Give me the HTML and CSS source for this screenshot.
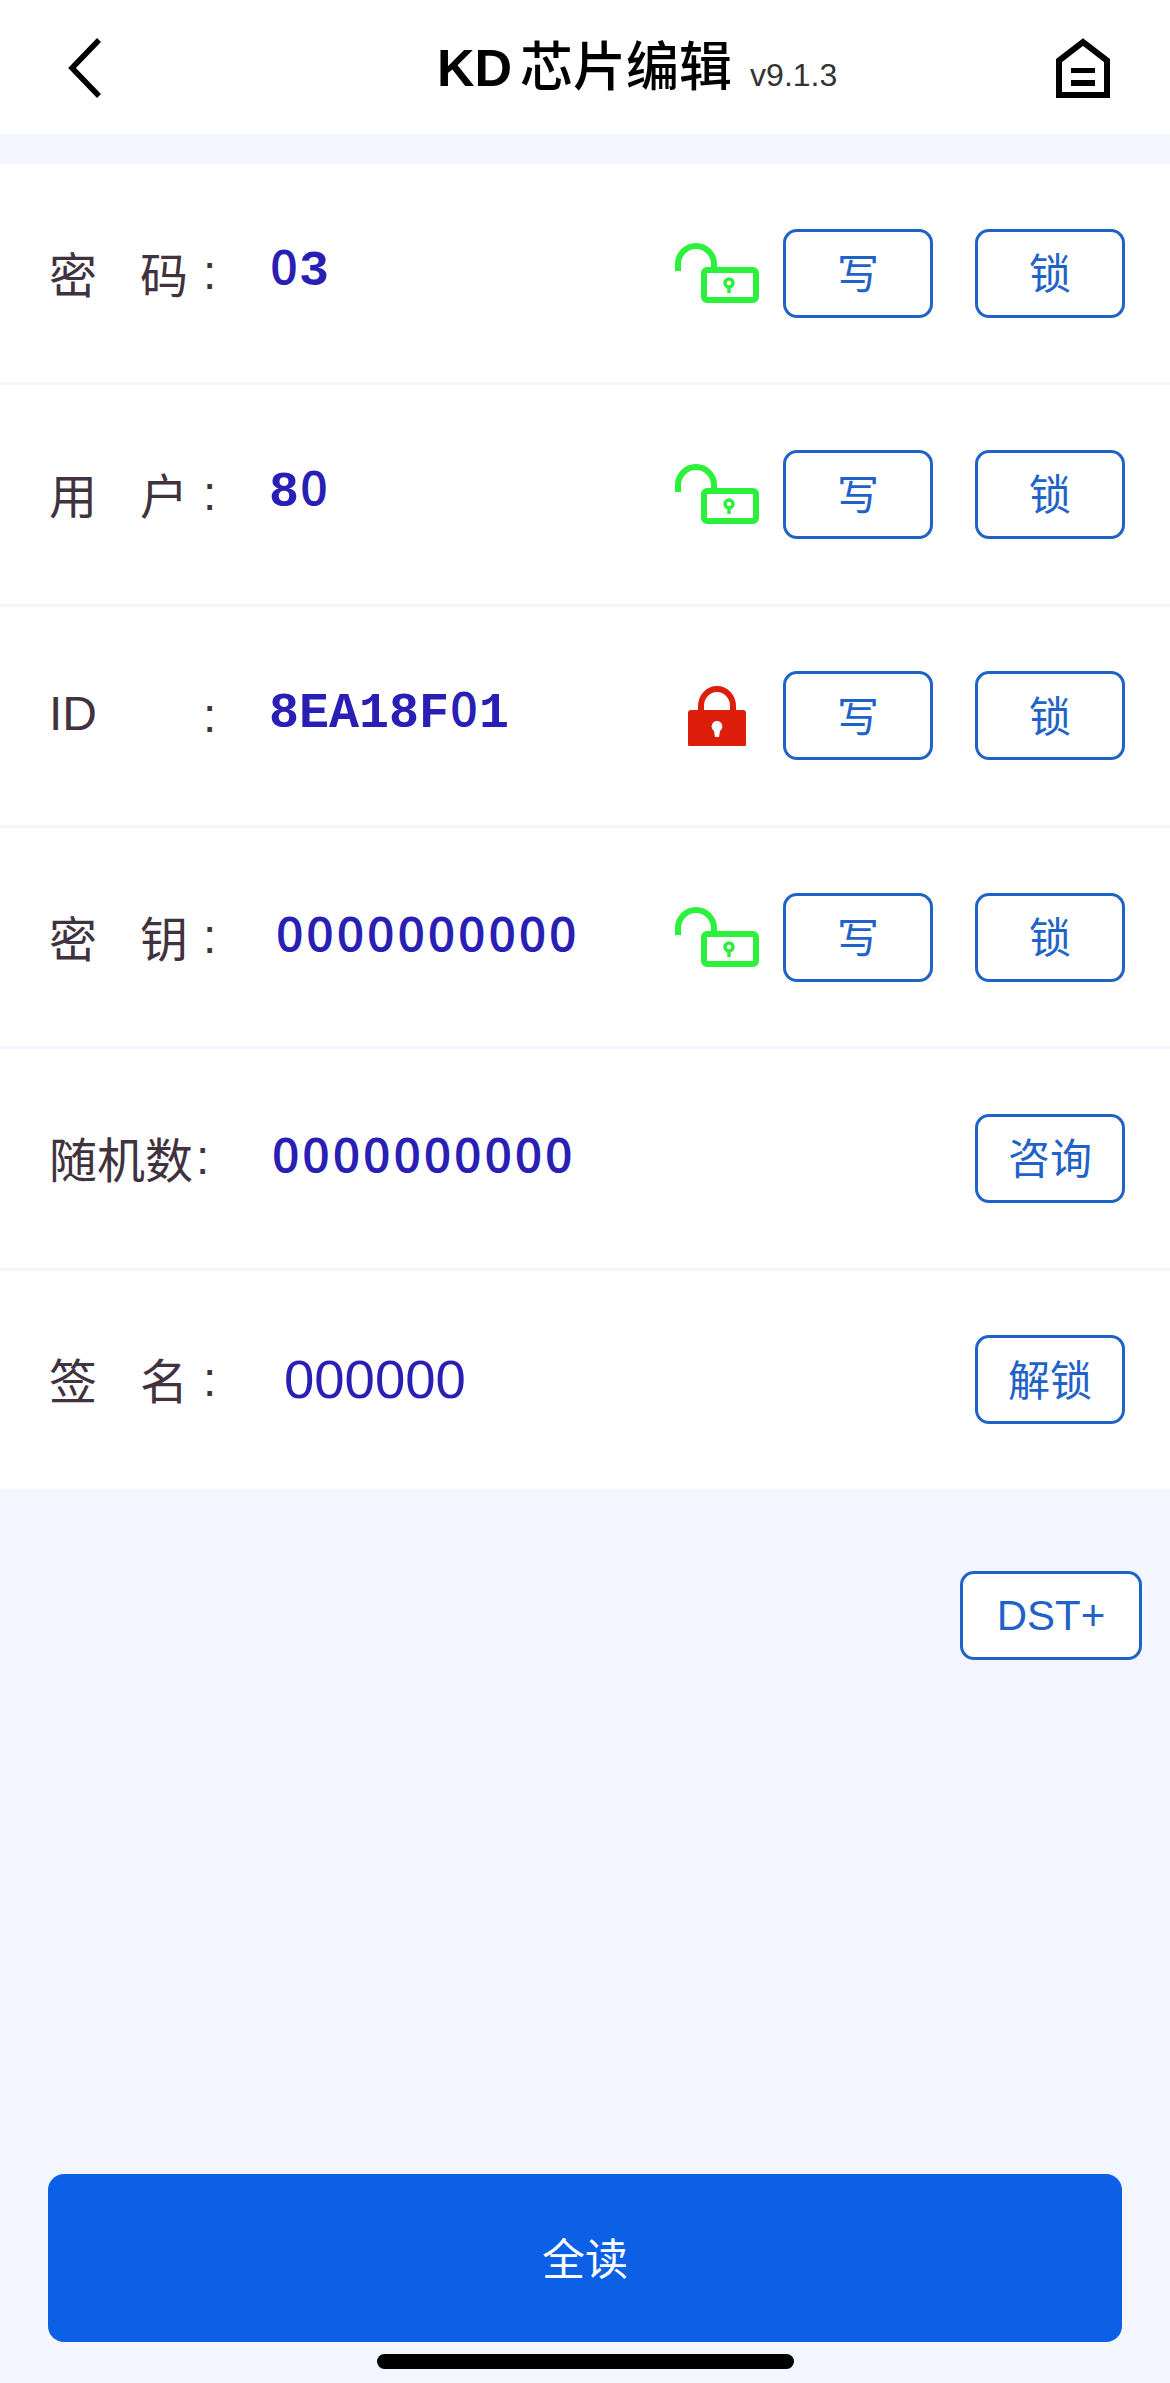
FILE: index.html
```html
<!DOCTYPE html>
<html lang="zh-CN">
<head>
<meta charset="utf-8">
<title>KD 芯片编辑</title>
<link rel="stylesheet" href="styles.css">
</head>
<body>
<svg class="defs" width="0" height="0" aria-hidden="true">
  <symbol id="open" viewBox="0 0 84 60">
    <path class="open-line" d="M3 28V21A18 18 0 0 1 39 21V26"/>
    <rect class="open-line" x="29" y="27" width="52" height="30" rx="3"/>
    <circle class="open-key" cx="54" cy="40" r="4"/>
    <path class="open-key" d="M54 44V50"/>
  </symbol>
  <symbol id="shut" viewBox="0 0 84 60">
    <path class="shut-line" d="M26 26V20A16 17 0 0 1 58 20V26"/>
    <path class="shut-body" fill-rule="evenodd" d="M16 24H68Q71 24 71 27V58Q71 61 68 61H16Q13 61 13 58V27Q13 24 16 24ZM42 35A5.500 5.500 0 0 0 39 45L40 51H44L45 45A5.500 5.500 0 0 0 42 35Z"/>
  </symbol>
</svg>
<div class="app">
  <header class="bar">
    <svg class="back" viewBox="0 0 40 62"><path d="M33 3L6 31L33 59"/></svg>
    <h1 class="title">KD<span class="title-cn">芯片编辑</span><small class="ver">v9.1.3</small></h1>
    <svg class="home" viewBox="0 0 54 60"><path class="home-line" d="M3 57V22.500L27 4L51 22.500V57Z"/><path class="home-fill" d="M15 30H39V35H15ZM15 42H39V48H15Z"/></svg>
  </header>
  <main class="list">
    <div class="row">
      <div class="label"><span class="ch">密</span><span class="ch gap">码</span><span class="colon">:</span></div>
      <div class="val mono"><span class="z">0</span>3</div>
      <svg class="lock"><use href="#open"/></svg>
      <button class="btn first">写</button><button class="btn">锁</button>
    </div>
    <div class="row">
      <div class="label"><span class="ch">用</span><span class="ch gap">户</span><span class="colon">:</span></div>
      <div class="val mono">8<span class="z">0</span></div>
      <svg class="lock"><use href="#open"/></svg>
      <button class="btn first">写</button><button class="btn">锁</button>
    </div>
    <div class="row">
      <div class="label"><span class="ch latin">ID</span><span class="colon far">:</span></div>
      <div class="val mono">8EA18F<span class="z">0</span>1</div>
      <svg class="lock"><use href="#shut"/></svg>
      <button class="btn first">写</button><button class="btn">锁</button>
    </div>
    <div class="row">
      <div class="label"><span class="ch">密</span><span class="ch gap">钥</span><span class="colon">:</span></div>
      <div class="val zeros in-8">0000000000</div>
      <svg class="lock"><use href="#open"/></svg>
      <button class="btn first">写</button><button class="btn">锁</button>
    </div>
    <div class="row">
      <div class="label"><span class="ch">随</span><span class="ch">机</span><span class="ch">数</span><span class="colon near">:</span></div>
      <div class="val zeros in-4">0000000000</div>
      <button class="btn push">咨询</button>
    </div>
    <div class="row">
      <div class="label"><span class="ch">签</span><span class="ch gap">名</span><span class="colon">:</span></div>
      <div class="val plain">000000</div>
      <button class="btn push">解锁</button>
    </div>
  </main>
  <div class="extra"><button class="btn wide">DST+</button></div>
  <button class="read">全读</button>
  <div class="home-bar"></div>
</div>
</body>
</html>
```
FILE: styles.css
```css
* { box-sizing: border-box; }
html, body { margin: 0; padding: 0; }
body { width: 1170px; height: 2383px; background: #f3f6fe; font-family: "Liberation Sans", "Noto Sans CJK SC", sans-serif; overflow: hidden; }
.defs { display: block; height: 0; }
.app { display: flex; flex-direction: column; height: 2383px; }

.bar { height: 134px; background: #fff; display: flex; align-items: center; padding-left: 66px; flex: none; }
.back { width: 40px; height: 62px; margin-top: 2px; fill: none; stroke: #000; stroke-width: 5.5; flex: none; }
.title { margin: 4px 0 0 331px; font-size: 52px; font-weight: 700; line-height: 134px; color: #000; white-space: nowrap; font-family: "Liberation Sans", "Noto Sans CJK SC", sans-serif; }
.title-cn { margin-left: 8px; font-size: 53px; font-family: "Noto Sans CJK SC", sans-serif; font-weight: 500; }
.ver { margin-left: 18px; font-size: 32px; font-weight: 400; color: #333; }
.home { width: 54px; height: 60px; margin-top: 2px; margin-left: auto; margin-right: 60px; flex: none; }
.home-line { fill: none; stroke: #000; stroke-width: 6; }
.home-fill { fill: #000; }

.list { margin-top: 30px; flex: none; }
.row { height: 221.33px; background: #fff; border-bottom: 3px solid #f3f6fe; display: flex; align-items: center; padding: 0 45px 0 49px; }
.label { width: 220px; flex: none; display: flex; align-items: center; margin-bottom: 3px; font-size: 48px; line-height: 60px; color: #40323f; font-family: "Noto Sans CJK SC", sans-serif; }
.ch { width: 48px; }
.gap { margin-left: 43px; }
.latin { font-family: "Liberation Sans", sans-serif; font-size: 48px; }
.colon { margin-left: 15px; margin-top: 3px; font-family: "Liberation Sans", sans-serif; }
.far { margin-left: 106px; }
.near { margin-left: 3px; }

.val { color: #2a1fb5; margin-bottom: 4px; }
.mono { font-family: "Liberation Mono", monospace; font-weight: 700; font-size: 50px; }
.z { display: inline-block; width: 30px; text-align: center; font-family: "Open Sans", sans-serif; font-weight: 600; font-size: 48px; line-height: 1; }
.zeros { font-family: "Open Sans", sans-serif; font-weight: 600; font-size: 48px; letter-spacing: 2.900px; margin-bottom: 7px; }
.in-8 { margin-left: 7px; }
.in-4 { margin-left: 3px; }
.plain { font-family: "Liberation Sans", sans-serif; font-size: 54.500px; margin-left: 15px; margin-bottom: 0; }

.lock { width: 84px; height: 60px; margin-left: auto; margin-right: 24px; flex: none; }
.open-line { fill: none; stroke: #2bf03c; stroke-width: 6; }
.open-key { fill: none; stroke: #2bf03c; stroke-width: 3.500; }
.shut-line { fill: none; stroke: #dc1e0b; stroke-width: 6; }
.shut-body { fill: #dc1e0b; }

.btn { width: 150px; height: 89px; flex: none; background: #fff; border: 3px solid #1f62c8; border-radius: 14px; color: #1f62c8; font-size: 42px; padding: 0 0 5px; font-family: "Noto Sans CJK SC", sans-serif; }
.first { margin-right: 42px; }
.push { margin-left: auto; }
.wide { width: 182px; padding: 2px 0 0; font-family: "Liberation Sans", sans-serif; }

.extra { display: flex; justify-content: flex-end; padding: 79px 28px 0 0; flex: 1; }
.read { margin: 0 48px; height: 168px; flex: none; background: #0c60e6; color: #fff; border: 0; border-radius: 16px; font-size: 43px; font-family: "Noto Sans CJK SC", sans-serif; padding: 0 0 5px; }
.home-bar { width: 417px; height: 15px; margin: 12px auto 14px; background: #000; border-radius: 8px; flex: none; }
```
